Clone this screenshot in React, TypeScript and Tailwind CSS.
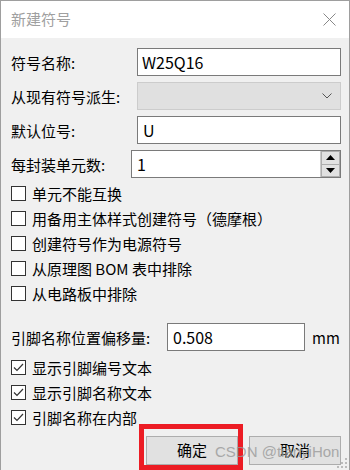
import { useState } from "react";

const font = { fontFamily: '"Noto Sans CJK SC", "Microsoft YaHei", sans-serif' };

function CheckRow({ label, checked }: { label: string; checked: boolean }) {
  return (
    <label className="flex h-[25px] items-center">
      <span className="flex h-[15px] w-[15px] items-center justify-center border border-[#333] bg-white">
        {checked && (
          <svg width="11" height="9" viewBox="0 0 11 9" fill="none">
            <path d="M1 4.5 L4 7.5 L10 1" stroke="#333" strokeWidth="1.2" />
          </svg>
        )}
      </span>
      <span className="ml-[6px] text-[15px] leading-none text-black">{label}</span>
    </label>
  );
}

function FieldRow({ label, children }: { label: string; children: React.ReactNode }) {
  return (
    <div className="flex h-[28px] items-center">
      <div className="w-[126px] text-[15px] leading-none text-black">{label}</div>
      <div className="flex-1 h-full">{children}</div>
    </div>
  );
}

export default function App() {
  const [name, setName] = useState("W25Q16");
  const [ref, setRef] = useState("U");
  const [units, setUnits] = useState("1");
  const [offset, setOffset] = useState("0.508");

  return (
    <div
      className="relative h-[470px] w-[350px] overflow-hidden border-x border-t border-[#9e9e9e] bg-[#f0f0f0]"
      style={font}
    >
      {/* title bar */}
      <div className="flex h-[37px] items-center justify-between bg-white pl-[10px] pr-[13px]">
        <span className="text-[15px] text-[#a0a0a0]">新建符号</span>
        <svg width="13" height="13" viewBox="0 0 13 13">
          <path d="M0.5 0.5 L12.5 12.5 M12.5 0.5 L0.5 12.5" stroke="#888" strokeWidth="1" />
        </svg>
      </div>

      <div className="flex flex-col pl-[10px] pr-[8px] pt-[10px]">
        <div className="flex flex-col gap-[6px]">
          <FieldRow label="符号名称:">
            <input
              value={name}
              onChange={(e) => setName(e.target.value)}
              className="h-full w-full border border-[#7a7a7a] bg-white px-[4px] text-[16px] text-black outline-none"
            />
          </FieldRow>
          <FieldRow label="从现有符号派生:">
            <div className="flex h-full w-full items-center justify-end border border-[#cccccc] bg-[#e0e0e0] pr-[8px]">
              <svg width="10" height="6" viewBox="0 0 10 6">
                <path d="M0.5 0.5 L5 5 L9.5 0.5" stroke="#555" strokeWidth="1" fill="none" />
              </svg>
            </div>
          </FieldRow>
          <FieldRow label="默认位号:">
            <input
              value={ref}
              onChange={(e) => setRef(e.target.value)}
              className="h-full w-full border border-[#7a7a7a] bg-white px-[5px] text-[16px] text-black outline-none"
            />
          </FieldRow>
          <FieldRow label="每封装单元数:">
            <div className="flex h-full w-full border border-[#7a7a7a] bg-white">
              <input
                value={units}
                onChange={(e) => setUnits(e.target.value)}
                className="h-full min-w-0 flex-1 bg-white px-[5px] text-[16px] text-black outline-none"
              />
              <div className="flex w-[20px] flex-col bg-[#f0f0f0] border-l border-[#ccc]">
                <button className="flex flex-1 items-center justify-center border border-[#adadad] bg-[#e1e1e1]">
                  <svg width="9" height="5" viewBox="0 0 9 5">
                    <path d="M0 5 L4.5 0 L9 5 Z" fill="#000" />
                  </svg>
                </button>
                <button className="flex flex-1 items-center justify-center border border-t-0 border-[#adadad] bg-[#e1e1e1]">
                  <svg width="9" height="5" viewBox="0 0 9 5">
                    <path d="M0 0 L4.5 5 L9 0 Z" fill="#000" />
                  </svg>
                </button>
              </div>
            </div>
          </FieldRow>
        </div>

        <div className="mt-[3px] flex flex-col">
          <CheckRow label="单元不能互换" checked={false} />
          <CheckRow label="用备用主体样式创建符号（德摩根）" checked={false} />
          <CheckRow label="创建符号作为电源符号" checked={false} />
          <CheckRow label="从原理图 BOM 表中排除" checked={false} />
          <CheckRow label="从电路板中排除" checked={false} />
        </div>

        <div className="mt-[17px] flex h-[28px] items-center">
          <div className="w-[156px] text-[15px] leading-none text-black">引脚名称位置偏移量:</div>
          <input
            value={offset}
            onChange={(e) => setOffset(e.target.value)}
            className="h-full w-[138px] border border-[#7a7a7a] bg-white px-[5px] text-[16px] text-black outline-none"
          />
          <span className="ml-[7px] text-[15px] leading-none text-black">mm</span>
        </div>

        <div className="mt-[4px] flex flex-col">
          <CheckRow label="显示引脚编号文本" checked />
          <CheckRow label="显示引脚名称文本" checked />
          <CheckRow label="引脚名称在内部" checked />
        </div>

        <div className="mt-[6px] flex justify-end gap-[11px]">
          <div className="relative">
            <button className="h-[29px] w-[92px] border border-[#adadad] bg-[#e1e1e1] text-[15px] text-black">
              确定
            </button>
            <div className="pointer-events-none absolute -left-[7px] -top-[12px] h-[46px] w-[104px] border-[5px] border-[#ec1c24]" />
          </div>
          <button className="h-[29px] w-[92px] border border-[#adadad] bg-[#e1e1e1] text-[15px] text-black">
            取消
          </button>
        </div>
      </div>

      {/* watermark */}
      <div
        className="pointer-events-none absolute left-[214px] top-[443px] text-[15px] leading-none text-[#9a9a9a] opacity-80"
        style={{ fontFamily: '"Liberation Sans", Arial, sans-serif' }}
      >
        CSDN @tianyiHon
      </div>

      {/* resize grip */}
      <svg className="absolute bottom-[1px] right-[1px]" width="11" height="11" viewBox="0 0 11 11">
        <rect x="8" y="0" width="2" height="2" fill="#bbb" />
        <rect x="4" y="4" width="2" height="2" fill="#bbb" />
        <rect x="8" y="4" width="2" height="2" fill="#bbb" />
        <rect x="0" y="8" width="2" height="2" fill="#bbb" />
        <rect x="4" y="8" width="2" height="2" fill="#bbb" />
        <rect x="8" y="8" width="2" height="2" fill="#bbb" />
      </svg>
    </div>
  );
}
